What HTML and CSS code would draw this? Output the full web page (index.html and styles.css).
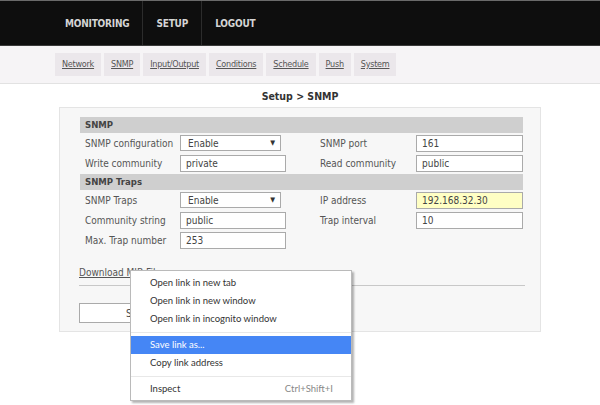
FILE: index.html
```html
<!DOCTYPE html>
<html>
<head>
    <title>Setup - SNMP</title>
    <link rel="stylesheet" href="styles.css">
</head>
<body>
    <div class="topbar">
        <ul class="mainnav">
            <li><a href="#">MONITORING</a></li>
            <li><a href="#">SETUP</a></li>
            <li class="last"><a href="#">LOGOUT</a></li>
        </ul>
    </div>
    <div class="subbar">
        <a href="#" class="tab">Network</a>
        <a href="#" class="tab">SNMP</a>
        <a href="#" class="tab">Input/Output</a>
        <a href="#" class="tab">Conditions</a>
        <a href="#" class="tab">Schedule</a>
        <a href="#" class="tab">Push</a>
        <a href="#" class="tab">System</a>
    </div>

    <h1 class="title">Setup &gt; SNMP</h1>

    <div class="panel">
        <form>
            <div class="section">SNMP</div>
            <div class="row">
                <label class="lbl">SNMP configuration</label>
                <span class="selwrap"><select class="sel"><option>Enable</option></select></span>
                <label class="lbl right">SNMP port</label>
                <input type="text" class="inp wide" value="161">
            </div>
            <div class="row">
                <label class="lbl">Write community</label>
                <input type="text" class="inp" value="private">
                <label class="lbl right">Read community</label>
                <input type="text" class="inp wide" value="public">
            </div>
            <div class="section">SNMP Traps</div>
            <div class="row">
                <label class="lbl">SNMP Traps</label>
                <span class="selwrap"><select class="sel"><option>Enable</option></select></span>
                <label class="lbl right">IP address</label>
                <input type="text" class="inp wide hl" value="192.168.32.30">
            </div>
            <div class="row">
                <label class="lbl">Community string</label>
                <input type="text" class="inp" value="public">
                <label class="lbl right">Trap interval</label>
                <input type="text" class="inp wide" value="10">
            </div>
            <div class="row">
                <label class="lbl">Max. Trap number</label>
                <input type="text" class="inp" value="253">
            </div>

            <div class="download"><a href="#">Download MIB File</a></div>
            <div class="buttons">
                <button type="button" class="save">Save</button>
            </div>
        </form>
    </div>

    <div class="ctxmenu">
        <div class="item">Open link in new tab</div>
        <div class="item">Open link in new window</div>
        <div class="item">Open link in incognito window</div>
        <div class="sep"></div>
        <div class="item active">Save link as...</div>
        <div class="item">Copy link address</div>
        <div class="sep"></div>
        <div class="item">Inspect <span class="key">Ctrl+Shift+I</span></div>
    </div>
</body>
</html>
```

FILE: styles.css
```css
* {
    box-sizing: border-box;
}

body {
    margin: 0;
    background: #fff;
    font-family: "DejaVu Sans Condensed", "DejaVu Sans", sans-serif;
    font-size: 10px;
    color: #444;
}

.topbar {
    height: 46px;
    background-color: #0e0e0e;
    border-top: 1px solid #6a6a6a;
    border-bottom: 1px solid #3a3a3a;
}

.mainnav {
    list-style: none;
    margin: 0 0 0 52px;
    padding: 0;
    display: flex;
    height: 44px;
}

.mainnav li {
    border-right: 1px solid #2c2c2c;
    display: flex;
    align-items: center;
}

.mainnav li.last {
    border-right: none;
}

.mainnav a {
    color: #d4d4d4;
    text-decoration: none;
    font-weight: bold;
    font-size: 10px;
    letter-spacing: -0.2px;
    padding: 0 13px;
}

.subbar {
    height: 38px;
    background-color: #f6f4f6;
    border-bottom: 1px solid #e2e2e2;
    display: flex;
    align-items: center;
    gap: 3px;
    padding-left: 55px;
}

.tab {
    background-color: #ebe7eb;
    color: #555;
    padding: 5px 7px;
    font-size: 9px;
    letter-spacing: -0.25px;
    line-height: 13px;
}

.title {
    text-align: center;
    font-size: 10.5px;
    font-weight: bold;
    color: #333;
    margin: 4px 0 0 0;
    height: 17px;
    line-height: 17px;
}

.panel {
    margin: 2px 59px 0 59px;
    background-color: #f7f7f7;
    border: 1px solid #e4e4e4;
    padding: 9px 17px 8px 20px;
}

.section {
    background-color: #cfcfcf;
    color: #444;
    font-weight: bold;
    font-size: 9.5px;
    height: 16px;
    line-height: 16px;
    padding-left: 5px;
    margin-bottom: 1px;
}

.row {
    display: grid;
    grid-template-columns: 100px 140px 96px 107px;
    align-items: center;
    height: 18px;
    margin-bottom: 2px;
    white-space: nowrap;
}

.lbl {
    padding-left: 5px;
    color: #555;
}

.lbl.right {
    padding-left: 0;
}

.inp {
    width: 106px;
    height: 17px;
    border: 1px solid #aaa;
    padding: 0 5px;
    font-family: inherit;
    font-size: 10px;
    color: #444;
    background: #fff;
}

.inp.wide {
    width: 107px;
}

.inp.hl {
    background-color: #ffffc4;
}

.selwrap {
    position: relative;
    width: 101px;
}

.selwrap::after {
    content: "\25BC";
    position: absolute;
    right: 6px;
    top: 4px;
    font-size: 7px;
    color: #333;
    pointer-events: none;
}

.sel {
    appearance: none;
    -webkit-appearance: none;
    width: 101px;
    height: 16px;
    border: 1px solid #aaa;
    border-radius: 0;
    font-family: inherit;
    font-size: 10px;
    color: #444;
    background: #fff;
    padding: 0 0 0 7px;
    display: block;
}

.download {
    margin-top: 17px;
    padding-bottom: 6px;
    border-bottom: 1px solid #c8c8c8;
    margin-left: -1px;
    margin-right: -2px;
    line-height: 13px;
}

.download a {
    color: #555;
}

.buttons {
    margin-top: 17px;
    margin-left: -1px;
}

.save {
    display: block;
    width: 116px;
    height: 20px;
    background: #fff;
    border: 1px solid #aaa;
    font-family: inherit;
    font-size: 10px;
    color: #444;
}

.ctxmenu {
    position: absolute;
    left: 130px;
    top: 270px;
    width: 222px;
    background: #fff;
    border: 1px solid #bababa;
    box-shadow: 2px 2px 2px rgba(0, 0, 0, 0.3);
    padding: 3px 0 2px 0;
    font-family: Lato, sans-serif;
    font-size: 9.5px;
    color: #333;
}

.item {
    height: 18px;
    line-height: 18px;
    padding-left: 19px;
    position: relative;
}

.item.active {
    background-color: #4586f5;
    color: #fff;
}

.sep {
    border-top: 1px solid #e8e8e8;
    margin: 4px 0 3px 0;
}

.key {
    position: absolute;
    right: 18px;
    color: #888;
}
```
